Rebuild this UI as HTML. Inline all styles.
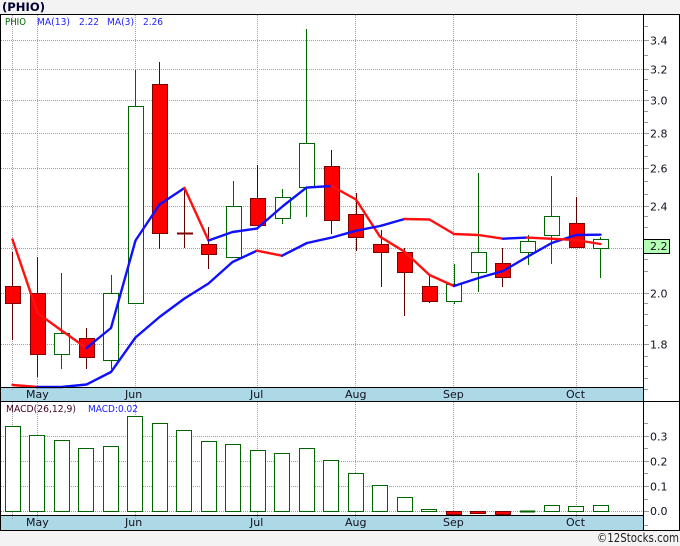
<!DOCTYPE html>
<html><head><meta charset="utf-8"><style>
html,body{margin:0;padding:0;background:#f3f3f3;width:680px;height:546px;overflow:hidden}
svg{display:block}
text{font-family:"DejaVu Sans","Liberation Sans",sans-serif}
</style></head><body>
<svg xmlns="http://www.w3.org/2000/svg" width="680" height="546" viewBox="0 0 680 546">
<rect width="680" height="546" fill="#f3f3f3"/>
<rect x="0" y="14" width="680" height="516" fill="#fff"/>
<rect x="1" y="388" width="642" height="13" fill="#add8e6"/>
<rect x="1" y="516" width="642" height="14" fill="#add8e6"/>
<g stroke="#a0a0a0" stroke-width="1" stroke-dasharray="1 1" fill="none" shape-rendering="crispEdges">
<path d="M1 40.5H649M1 69.5H649M1 100.5H649M1 133.5H649M1 168.5H649M1 206.5H649M1 248.5H649M1 293.5H649M1 344.5H649"/>
<path d="M1 436.5H649M1 461.5H649M1 486.5H649M1 511.5H649"/>
<path d="M12.5 15V391M37.5 15V391M135.5 15V391M257.5 15V391M355.5 15V391M453.5 15V391M576.5 15V391"/>
<path d="M12.5 402V519M37.5 402V519M135.5 402V519M257.5 402V519M355.5 402V519M453.5 402V519M576.5 402V519"/>
</g>
<g stroke="#999" stroke-width="1" fill="none" shape-rendering="crispEdges">
<path d="M644 26.5h4M644 55.5h4M644 79.5h4M644 90.5h4M644 111.5h4M644 122.5h4M644 145.5h4M644 156.5h4M644 181.5h4M644 194.5h4M644 216.5h4M644 227.5h4M644 259.5h4M644 271.5h4M644 303.5h4M644 314.5h4M644 325.5h4M644 356.5h4M644 366.5h4M644 378.5h4M644 389.5h4"/>
<path d="M644 40.5h5M644 69.5h5M644 100.5h5M644 133.5h5M644 168.5h5M644 206.5h5M644 293.5h5M644 344.5h5"/>
<path d="M644 423.5h4M644 448.5h4M644 473.5h4M644 499.5h4M644 525.5h4M644 436.5h5M644 461.5h5M644 486.5h5M644 511.5h5"/>
</g>
<!-- wicks -->
<g stroke="#600000" stroke-width="1" shape-rendering="crispEdges" fill="none">
<path d="M12.5 252V340M37.5 257V377M86.5 328V369M159.5 62V249M184.5 188V248M208.5 227V269M257.5 165V226M331.5 150V234M356.5 193V251M381.5 230V287M404.5 248V316M429.5 276V303M502.5 248V287M576.5 197V248"/>
</g>
<g stroke="#006400" stroke-width="1" shape-rendering="crispEdges" fill="none">
<path d="M61.5 273V369M111.5 275V369M135.5 70V304M233.5 181V258M282.5 189V224M306.5 29V217M454.5 264V304M478.5 173V292M528.5 235V265M551.5 176V264M600.5 237V278"/>
</g>
<!-- red bodies -->
<g fill="#ff0000" stroke="#800000" stroke-width="1" shape-rendering="crispEdges">
<rect x="5.5" y="286.5" width="15" height="17"/>
<rect x="30.5" y="293.5" width="15" height="61"/>
<rect x="79.5" y="338.5" width="15" height="19"/>
<rect x="152.5" y="84.5" width="15" height="149"/>
<rect x="177.5" y="233" width="15" height="1"/>
<rect x="201.5" y="244.5" width="15" height="10"/>
<rect x="250.5" y="198.5" width="15" height="27"/>
<rect x="324.5" y="166.5" width="15" height="54"/>
<rect x="348.5" y="214.5" width="15" height="23"/>
<rect x="373.5" y="244.5" width="15" height="8"/>
<rect x="397.5" y="252.5" width="15" height="20"/>
<rect x="422.5" y="286.5" width="15" height="15"/>
<rect x="495.5" y="263.5" width="15" height="14"/>
<rect x="569.5" y="223.5" width="15" height="24"/>
</g>
<!-- green bodies -->
<g fill="#fff" stroke="#006400" stroke-width="1" shape-rendering="crispEdges">
<rect x="54.5" y="333.5" width="15" height="21"/>
<rect x="103.5" y="293.5" width="15" height="67"/>
<rect x="128.5" y="106.5" width="15" height="197"/>
<rect x="226.5" y="206.5" width="15" height="51"/>
<rect x="275.5" y="197.5" width="15" height="21"/>
<rect x="299.5" y="143.5" width="15" height="44"/>
<rect x="446.5" y="284.5" width="15" height="17"/>
<rect x="471.5" y="252.5" width="15" height="20"/>
<rect x="520.5" y="241.5" width="15" height="11"/>
<rect x="544.5" y="216.5" width="15" height="19"/>
<rect x="593.5" y="239.5" width="15" height="9"/>
</g>
<!-- MA lines -->
<g fill="none" stroke-width="2.4" stroke-linejoin="round" stroke-linecap="round">
<path stroke="#ff1010" d="M12.5 239.5L37.5 313L61.5 330.5L86.5 348"/>
<path stroke="#1010ff" d="M86.5 348L111 328L135.5 240.5L159.5 204.5L184.5 188"/>
<path stroke="#ff1010" d="M184.5 188L208.5 240.5"/>
<path stroke="#1010ff" d="M208.5 240.5L232.5 232L257 228.5L283 206L306.5 187.6L331.5 186"/>
<path stroke="#ff1010" d="M331.5 186L356 199.5L380 236.7L404.5 251.7L429.5 275L454 286"/>
<path stroke="#1010ff" d="M454 286L478.5 278L503 271L527 257L551.7 243L576 235L600.5 234.7"/>
<path stroke="#ff1010" d="M12.5 385L37.5 387"/>
<path stroke="#1010ff" d="M37.5 387L61.5 387L86.5 384.5L111 372L135.5 337.5L159.5 317L184.5 298.5L208.5 283.5L232.5 262L257 250.7"/>
<path stroke="#ff1010" d="M257 250.7L282 255.7"/>
<path stroke="#1010ff" d="M282 255.7L307 243L331.7 237.6L356 230.7L380 226L404.5 219"/>
<path stroke="#ff1010" d="M404.5 219L429.5 219.5L454 234L478.5 235L503 238.7"/>
<path stroke="#1010ff" d="M503 238.7L527 237.6"/>
<path stroke="#ff1010" d="M527 237.6L576 240L600.5 244"/>
</g>
<!-- MACD bars -->
<g fill="#fff" stroke="#006400" stroke-width="1" shape-rendering="crispEdges">
<rect x="5.5" y="426.5" width="15" height="85"/>
<rect x="29.5" y="435.5" width="15" height="76"/>
<rect x="54.5" y="440.5" width="15" height="71"/>
<rect x="78.5" y="448.5" width="15" height="63"/>
<rect x="103.5" y="446.5" width="15" height="65"/>
<rect x="127.5" y="416.5" width="15" height="95"/>
<rect x="152.5" y="423.5" width="15" height="88"/>
<rect x="176.5" y="430.5" width="15" height="81"/>
<rect x="201.5" y="441.5" width="15" height="70"/>
<rect x="225.5" y="444.5" width="15" height="67"/>
<rect x="250.5" y="450.5" width="15" height="61"/>
<rect x="274.5" y="453.5" width="15" height="58"/>
<rect x="299.5" y="448.5" width="15" height="63"/>
<rect x="323.5" y="460.5" width="15" height="51"/>
<rect x="348.5" y="473.5" width="15" height="38"/>
<rect x="372.5" y="485.5" width="15" height="26"/>
<rect x="397.5" y="497.5" width="15" height="14"/>
<rect x="421.5" y="509.5" width="15" height="2"/>
<rect x="520.5" y="511" width="14" height="1"/>
<rect x="544.5" y="505.5" width="15" height="6"/>
<rect x="568.5" y="506.5" width="15" height="5"/>
<rect x="593.5" y="505.5" width="15" height="6"/>
</g>
<g fill="#ff0000" stroke="#800000" stroke-width="1" shape-rendering="crispEdges">
<rect x="446.5" y="511.5" width="15" height="3"/>
<rect x="470.5" y="511.5" width="15" height="2"/>
<rect x="495.5" y="511.5" width="15" height="3"/>
</g>
<!-- frame -->
<g fill="#000" shape-rendering="crispEdges">
<rect x="0" y="14" width="680" height="1"/>
<rect x="0" y="14" width="1" height="516"/>
<rect x="679" y="14" width="1" height="516"/>
<rect x="643" y="14" width="1" height="516"/>
<rect x="0" y="387" width="643" height="1"/>
<rect x="0" y="401" width="680" height="1"/>
<rect x="0" y="515" width="643" height="1"/>
<rect x="0" y="530" width="680" height="1"/>
</g>
<rect x="643.5" y="239.5" width="26" height="14" fill="#b4ffb4" stroke="#000" stroke-width="1" shape-rendering="crispEdges"/>
<!-- text -->
<text x="2" y="11" font-size="11.6" font-weight="bold" fill="#000030" textLength="43" lengthAdjust="spacingAndGlyphs">(PHIO)</text>
<g font-size="10">
<text x="5" y="25" fill="#006400" textLength="21" lengthAdjust="spacingAndGlyphs">PHIO</text>
<text x="37" y="25" fill="#2020ff" textLength="33" lengthAdjust="spacingAndGlyphs">MA(13)</text>
<text x="79" y="25" fill="#2020ff" textLength="20" lengthAdjust="spacingAndGlyphs">2.22</text>
<text x="107" y="25" fill="#2020ff" textLength="27" lengthAdjust="spacingAndGlyphs">MA(3)</text>
<text x="143" y="25" fill="#2020ff" textLength="20" lengthAdjust="spacingAndGlyphs">2.26</text>
<text x="6" y="412" fill="#400020" textLength="70" lengthAdjust="spacingAndGlyphs">MACD(26,12,9)</text>
<text x="88" y="412" fill="#2020ff" textLength="50" lengthAdjust="spacingAndGlyphs">MACD:0.02</text>
</g>
<g font-size="11" fill="#101020">
<text x="650" y="44.5">3.4</text>
<text x="650" y="73.5">3.2</text>
<text x="650" y="104.5">3.0</text>
<text x="650" y="137.5">2.8</text>
<text x="650" y="172.5">2.6</text>
<text x="650" y="210.5">2.4</text>
<text x="650" y="250">2.2</text>
<text x="650" y="297.5">2.0</text>
<text x="650" y="348.5">1.8</text>
<text x="650" y="440.5">0.3</text>
<text x="650" y="465.5">0.2</text>
<text x="650" y="490.5">0.1</text>
<text x="650" y="515">0.0</text>
<text x="26" y="398">May</text>
<text x="125" y="398">Jun</text>
<text x="250" y="398">Jul</text>
<text x="345" y="398">Aug</text>
<text x="443" y="398">Sep</text>
<text x="566" y="398">Oct</text>
<text x="26" y="526">May</text>
<text x="125" y="526">Jun</text>
<text x="250" y="526">Jul</text>
<text x="345" y="526">Aug</text>
<text x="443" y="526">Sep</text>
<text x="566" y="526">Oct</text>
</g>
<text x="597" y="542" font-size="12" fill="#202020" textLength="82" lengthAdjust="spacingAndGlyphs">©12Stocks.com</text>
</svg>
</body></html>
